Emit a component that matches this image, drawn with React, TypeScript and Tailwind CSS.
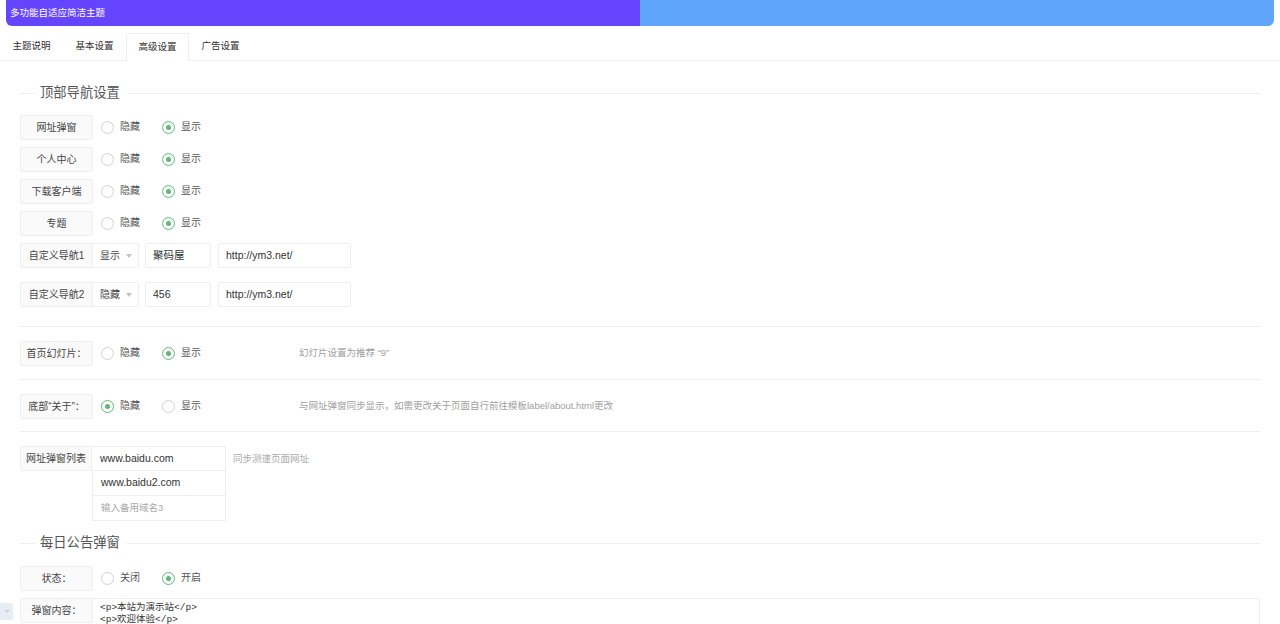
import React from "react";

const Radio = ({ checked, label }: { checked?: boolean; label: string }) => (
  <div className="flex w-[61px] items-center">
    <span
      className={
        checked
          ? "flex h-[13px] w-[13px] items-center justify-center rounded-full border border-[#5FB878]"
          : "flex h-[13px] w-[13px] items-center justify-center rounded-full border border-[#d2d2d2]"
      }
    >
      {checked && <span className="h-[5px] w-[5px] rounded-full bg-[#5FB878]" />}
    </span>
    <span className="ml-[6px] text-[10px] leading-none text-[#555]">{label}</span>
  </div>
);

const Label = ({ children, w = "w-[73px]" }: { children: React.ReactNode; w?: string }) => (
  <div
    className={`flex h-[25px] ${w} shrink-0 items-center justify-center rounded-[2px] border border-[#eee] bg-[#fafafa] text-[10px] text-[#444]`}
  >
    {children}
  </div>
);

const RadioRow = ({
  label,
  a,
  b,
  first,
  hint,
  className = "",
}: {
  label: string;
  a: string;
  b: string;
  first?: boolean;
  hint?: string;
  className?: string;
}) => (
  <div className={`flex h-[26px] items-center ${className}`}>
    <Label>{label}</Label>
    <div className="ml-[8px] flex items-center">
      <Radio label={a} checked={first} />
      <Radio label={b} checked={!first} />
    </div>
    {hint && <span className="ml-[76px] text-[9.5px] text-[#a0a0a0]">{hint}</span>}
  </div>
);

const Legend = ({ title, className = "" }: { title: string; className?: string }) => (
  <div className={`flex h-[20px] items-center ${className}`}>
    <div className="h-px w-[15px] bg-[#eee]" />
    <span className="mx-[5px] text-[13.3px] leading-none text-[#555]">{title}</span>
    <div className="ml-[2px] h-px flex-1 bg-[#eee]" />
  </div>
);

const CustomNav = ({
  label,
  sel,
  name,
  url,
  className = "",
}: {
  label: string;
  sel: string;
  name: string;
  url: string;
  className?: string;
}) => (
  <div className={`flex h-[25px] items-center ${className}`}>
    <div className="flex h-[25px] w-[73px] items-center justify-center rounded-l-[2px] border border-[#eee] bg-[#fafafa] text-[10px] text-[#444]">
      {label}
    </div>
    <div className="flex h-[25px] w-[46px] items-center rounded-r-[2px] border border-l-0 border-[#eee] pl-[7px] text-[10px] text-[#444]">
      {sel}
      <span className="ml-[6px] h-0 w-0 border-x-[3.5px] border-t-[4px] border-x-transparent border-t-[#c2c2c2]" />
    </div>
    <div className="ml-[6px] flex h-[25px] w-[66px] items-center rounded-[2px] border border-[#eee] pl-[7px] text-[10.5px] text-[#333]">
      {name}
    </div>
    <div className="ml-[7px] flex h-[25px] w-[133px] items-center rounded-[2px] border border-[#eee] pl-[7px] text-[10.5px] text-[#333]">
      {url}
    </div>
  </div>
);

export default function App() {
  return (
    <div className="relative h-[624px] overflow-hidden bg-white font-['Liberation_Sans','Noto_Sans_CJK_SC',sans-serif]">
      {/* top bar */}
      <div className="px-[6px]">
        <div className="flex h-[26px] overflow-hidden rounded-b-[6px]">
          <div className="flex w-[634px] items-center bg-[#6544fd] pl-[4px] text-[9.5px] text-white">
            多功能自适应简洁主题
          </div>
          <div className="flex-1 bg-[#60a5fc]" />
        </div>
      </div>

      {/* tabs */}
      <div className="mt-[7px] flex h-[28px] border-b border-[#eee]">
        <div className="flex w-[63px] items-center justify-center text-[9.5px] text-[#333]">主题说明</div>
        <div className="flex w-[63px] items-center justify-center text-[9.5px] text-[#333]">基本设置</div>
        <div className="-mb-px flex w-[63px] items-center justify-center rounded-t-[2px] border border-b-0 border-[#eee] bg-white text-[9.5px] text-[#333]">
          高级设置
        </div>
        <div className="flex w-[63px] items-center justify-center text-[9.5px] text-[#333]">广告设置</div>
      </div>

      <div className="px-[20px]">
        <Legend title="顶部导航设置" className="mt-[22px]" />

        <div className="mt-[11px] flex flex-col gap-[6px]">
          <RadioRow label="网址弹窗" a="隐藏" b="显示" />
          <RadioRow label="个人中心" a="隐藏" b="显示" />
          <RadioRow label="下载客户端" a="隐藏" b="显示" />
          <RadioRow label="专题" a="隐藏" b="显示" />
        </div>

        <CustomNav label="自定义导航1" sel="显示" name="聚码屋" url="http://ym3.net/" className="mt-[7px]" />
        <CustomNav label="自定义导航2" sel="隐藏" name="456" url="http://ym3.net/" className="mt-[14px]" />

        <div className="mt-[19px] h-px bg-[#eee]" />
        <RadioRow
          label="首页幻灯片："
          a="隐藏"
          b="显示"
          hint="幻灯片设置为推荐 “9”"
          className="mt-[13px]"
        />
        <div className="mt-[13px] h-px bg-[#eee]" />
        <RadioRow
          label="底部“关于”："
          a="隐藏"
          b="显示"
          first
          hint="与网址弹窗同步显示，如需更改关于页面自行前往模板label/about.html更改"
          className="mt-[13px]"
        />
        <div className="mt-[12px] h-px bg-[#eee]" />

        {/* url list */}
        <div className="mt-[14px] flex items-start">
          <Label w="w-[72px]">网址弹窗列表</Label>
          <div className="flex w-[134px] flex-col">
            <div className="flex h-[25px] items-center border border-l-0 border-[#eee] pl-[8px] text-[10.5px] text-[#333]">
              www.baidu.com
            </div>
            <div className="flex h-[25px] items-center border border-t-0 border-[#eee] pl-[8px] text-[10.5px] text-[#333]">
              www.baidu2.com
            </div>
            <div className="flex h-[25px] items-center border border-t-0 border-[#eee] pl-[8px] text-[9.5px] text-[#aaa]">
              输入备用域名3
            </div>
          </div>
          <span className="ml-[7px] mt-[6px] text-[9.5px] text-[#aaa]">同步测速页面网址</span>
        </div>

        <Legend title="每日公告弹窗" className="mt-[12px]" />

        <div className="mt-[12px] flex h-[26px] items-center">
          <Label>状态：</Label>
          <div className="ml-[8px] flex items-center">
            <Radio label="关闭" />
            <Radio label="开启" checked />
          </div>
        </div>

        <div className="mt-[7px] flex items-start">
          <Label>弹窗内容：</Label>
          <div className="h-[80px] flex-1 rounded-[2px] border border-l-0 border-[#eee] pl-[7px] pt-[3px] font-['Liberation_Mono','Noto_Sans_CJK_SC',monospace] text-[9.5px] leading-[12px] text-[#333]">
            <div>&lt;p&gt;本站为演示站&lt;/p&gt;</div>
            <div>&lt;p&gt;欢迎体验&lt;/p&gt;</div>
          </div>
        </div>
      </div>

      {/* floating side tab */}
      <div className="absolute left-0 top-[603px] flex h-[17px] w-[13px] items-center justify-center rounded-r-[2px] bg-[#e6edf5]">
        <span className="h-0 w-0 border-x-[3px] border-t-[3px] border-x-transparent border-t-[#c8d3e0]" />
      </div>
    </div>
  );
}
